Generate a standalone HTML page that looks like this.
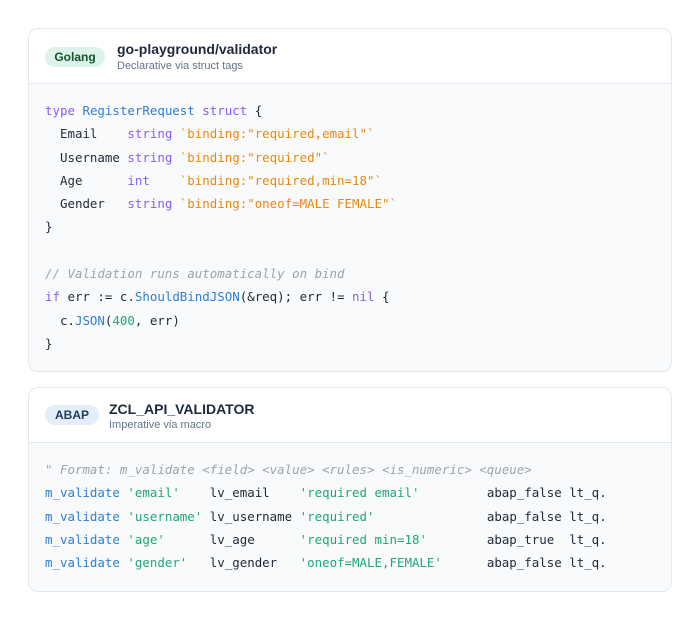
<!DOCTYPE html>
<html><head><meta charset="utf-8"><style>
body{margin:0;background:#fff;width:700px;height:636px;font-family:"Liberation Sans",sans-serif;}
.card{position:absolute;left:28px;width:642px;border:1px solid #e2e8f0;border-radius:10px;background:#f8fafc;overflow:hidden;}
.hd{background:#fff;border-bottom:1px solid #e2e8f0;position:relative;}
.badge{position:absolute;left:16px;border-radius:10px;font-weight:bold;font-size:12px;text-align:center;line-height:20px;height:20px;}
.t{position:absolute;font-weight:bold;font-size:14px;color:#1e293b;}
.s{position:absolute;font-size:11px;color:#64748b;}
pre{margin:0;font-family:"DejaVu Sans Mono","Liberation Mono",monospace;font-size:12.45px;line-height:23.3px;color:#1f2937;position:absolute;left:16px;}
.k{color:#8b5cf6}.b{color:#2f7fd6}.o{color:#e8890c}.g{color:#1fa77a}.c{color:#9ca3af;font-style:italic}
</style></head><body>
<div class="card" style="top:28px;height:342px;">
 <div class="hd" style="height:54px;">
  <div class="badge" style="top:18px;width:60px;background:#ddf3ea;color:#14532d;">Golang</div>
  <div class="t" style="left:88px;top:12px;">go-playground/validator</div>
  <div class="s" style="left:88px;top:31px;">Declarative via struct tags</div>
 </div>
 <pre style="top:70px;"><span class="k">type</span> <span class="b">RegisterRequest</span> <span class="k">struct</span> {
  Email    <span class="k">string</span> <span class="o">`binding:"required,email"`</span>
  Username <span class="k">string</span> <span class="o">`binding:"required"`</span>
  Age      <span class="k">int</span>    <span class="o">`binding:"required,min=18"`</span>
  Gender   <span class="k">string</span> <span class="o">`binding:"oneof=MALE FEMALE"`</span>
}

<span class="c">// Validation runs automatically on bind</span>
<span class="k">if</span> err := c.<span class="b">ShouldBindJSON</span>(&amp;req); err != <span class="k">nil</span> {
  c.<span class="b">JSON</span>(<span class="g">400</span>, err)
}</pre>
</div>
<div class="card" style="top:387px;height:203px;">
 <div class="hd" style="height:54px;">
  <div class="badge" style="top:17px;width:54px;background:#e3eefa;color:#1e3a5f;">ABAP</div>
  <div class="t" style="left:80px;top:13px;">ZCL_API_VALIDATOR</div>
  <div class="s" style="left:80px;top:31px;">Imperative via macro</div>
 </div>
 <pre style="top:70px;"><span class="c">" Format: m_validate &lt;field&gt; &lt;value&gt; &lt;rules&gt; &lt;is_numeric&gt; &lt;queue&gt;</span>
<span class="b">m_validate</span> <span class="g">'email'</span>    lv_email    <span class="g">'required email'</span>         abap_false lt_q.
<span class="b">m_validate</span> <span class="g">'username'</span> lv_username <span class="g">'required'</span>               abap_false lt_q.
<span class="b">m_validate</span> <span class="g">'age'</span>      lv_age      <span class="g">'required min=18'</span>        abap_true  lt_q.
<span class="b">m_validate</span> <span class="g">'gender'</span>   lv_gender   <span class="g">'oneof=MALE,FEMALE'</span>      abap_false lt_q.</pre>
</div>
</body></html>
